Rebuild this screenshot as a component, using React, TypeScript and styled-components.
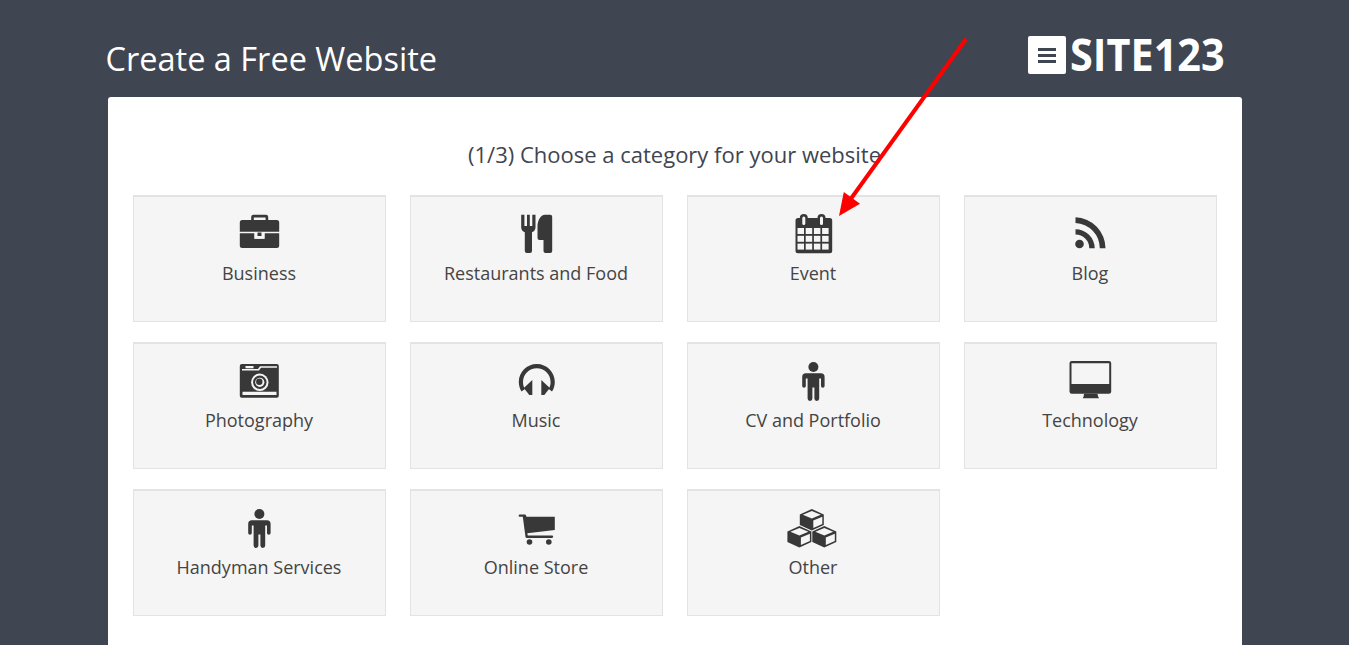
import React from 'react';
import styled, { createGlobalStyle } from 'styled-components';

const GlobalStyle = createGlobalStyle`
  html, body {
    margin: 0;
    padding: 0;
    height: 100%;
    overflow: hidden;
    background: #3f4551;
  }
  * {
    box-sizing: border-box;
  }
`;

const Page = styled.div`
  position: relative;
  height: 645px;
  overflow: hidden;
  padding: 0 107px 0 108px;
  background: #3f4551;
  font-family: 'Open Sans', 'Liberation Sans', sans-serif;
`;

const Header = styled.header`
  display: flex;
  justify-content: space-between;
  align-items: flex-start;
  height: 97px;
  padding: 36px 19px 0 0;
`;

const Title = styled.h1`
  margin: 1px 0 0 -2.5px;
  font-size: 32.5px;
  line-height: 44px;
  font-weight: 400;
  color: #fff;
`;

const Logo = styled.div`
  display: flex;
  align-items: center;
  gap: 4px;
  height: 38px;
`;

const LogoMark = styled.div`
  display: flex;
  flex-direction: column;
  justify-content: center;
  gap: 3px;
  width: 38px;
  height: 38px;
  padding: 0 10px;
  background: #fff;
  border-radius: 2px;
`;

const LogoBar = styled.span`
  display: block;
  height: 3px;
  background: #3f4551;
`;

const LogoText = styled.span`
  width: 153px;
  margin-top: -2px;
  font-size: 45px;
  line-height: 38px;
  font-weight: 700;
  white-space: nowrap;
  color: #fff;
  transform: scaleX(0.92);
  transform-origin: left center;
`;

const Panel = styled.main`
  height: 700px;
  padding: 40px 24px 0 25px;
  background: #fff;
  border-radius: 3px;
`;

const Heading = styled.h2`
  margin: 0 0 23px;
  padding-right: 2px;
  font-size: 22px;
  line-height: 35px;
  font-weight: 400;
  text-align: center;
  color: #3f4551;
`;

const Grid = styled.div`
  display: grid;
  grid-template-columns: repeat(4, 253px);
  grid-auto-rows: 127px;
  column-gap: 24px;
  row-gap: 20px;
`;

const Card = styled.div`
  display: flex;
  flex-direction: column;
  align-items: center;
  padding-top: 15px;
  background: #f5f5f5;
  border: 1px solid #e3e3e3;
  border-top-width: 2px;
`;

const IconBox = styled.svg`
  display: block;
  width: 60px;
  height: 42px;
  fill: #383838;
`;

const Label = styled.span`
  margin-top: 6px;
  padding-right: 1px;
  font-size: 18px;
  line-height: 26px;
  color: #444;
`;

const ArrowLayer = styled.svg`
  position: absolute;
  top: 0;
  left: 0;
  width: 1349px;
  height: 645px;
  pointer-events: none;
`;

const W = '#f5f5f5';

const Briefcase = () => (
  <IconBox viewBox="0 0 60 42">
    <path d="M21.2 8V5a2.3 2.3 0 0 1 2.3-2.3h12.4A2.3 2.3 0 0 1 38.2 5v3h-2.6V5.4H23.8V8z" />
    <path d="M12.3 8h34.4a2.5 2.5 0 0 1 2.5 2.5v9.3H9.8v-9.3a2.5 2.5 0 0 1 2.5-2.5z" />
    <path d="M9.8 21.2h14.7v5.500h10v-5.500h14.700v12.300a2.500 2.500 0 0 1-2.500 2.500H12.300a2.500 2.500 0 0 1-2.500-2.500z" />
    <path fill={W} d="M24.5 20h10v6.700h-10z" />
    <path d="M27.5 20.500h4v3.500h-4z" />
  </IconBox>
);

const Cutlery = () => (
  <IconBox viewBox="0 0 60 42">
    <path d="M14.2 2.700h3.200v11.300h2.600V2.700h2.800v11.300h2.500V2.700h3.200V15.500a5.500 5.500 0 0 1-3.500 4.800V39a2 2 0 0 1-2 2h-3.200a2 2 0 0 1-2-2V20.300a5.500 5.500 0 0 1-3.600-4.800z" />
    <path d="M38 2.700h5.200a2 2 0 0 1 2 2V39a2 2 0 0 1-2 2h-4.700a2 2 0 0 1-2-2V28h-4a2 2 0 0 1-2-2V14c0-5 3-11.300 7.500-11.300z" />
  </IconBox>
);

const CALENDAR_CELLS = [0, 1, 2, 3].flatMap(col =>
  [0, 1, 2].map(row => ({ col, row })),
);

const Calendar = () => (
  <IconBox viewBox="0 0 60 42">
    <rect x="11.5" y="6" width="36.7" height="35.3" rx="2.5" />
    <rect x="15.8" y="2" width="8" height="12" rx="4" />
    <rect x="33.5" y="2" width="8" height="12" rx="4" />
    <rect x="18.3" y="4.5" width="3" height="8.5" rx="1.5" fill={W} />
    <rect x="36" y="4.5" width="3" height="8.5" rx="1.5" fill={W} />
    {CALENDAR_CELLS.map(({ col, row }) => (
      <rect
        key={`${col}-${row}`}
        x={13.5 + col * 8.2}
        y={16 + row * 7.8}
        width="6.5"
        height="6"
        fill={W}
      />
    ))}
  </IconBox>
);

const Rss = () => (
  <IconBox viewBox="0 0 60 42">
    <circle cx="18.5" cy="32" r="4.3" />
    <path d="M14.5 17.2v5.400a13.800 13.800 0 0 1 13.800 13.700h5.400A19.200 19.200 0 0 0 14.500 17.200z" />
    <path d="M14.5 5.3v5.600a25.400 25.400 0 0 1 24.300 25.400h5.700A31 31 0 0 0 14.500 5.300z" />
  </IconBox>
);

const Camera = () => (
  <IconBox viewBox="0 0 60 42">
    <rect x="9.8" y="5" width="39" height="33.7" rx="2" />
    <path fill={W} d="M15.5 7h8v2.300h-8zM12 10h16l2-2.800h17v1.600H31l-2 2.800H12z" />
    <path fill={W} d="M12.5 32.700h34v3.300h-34z" />
    <circle cx="29.8" cy="23.3" r="8.7" fill={W} />
    <circle cx="29.8" cy="23.3" r="6.7" />
    <circle cx="29.8" cy="23.3" r="4.6" fill={W} />
    <circle cx="29.3" cy="22.8" r="3.2" />
  </IconBox>
);

const Headphones = () => (
  <IconBox viewBox="0 0 60 42">
    <path d="M29.8 5C19.8 5 11.8 13 11.8 23c0 3.600 1 6.800 2.800 9.500l3.300-2.600c-1.300-2-1.900-4.300-1.900-6.900 0-7.600 6.200-13.700 13.800-13.700S43.600 15.400 43.600 23c0 2.600-.6 4.900-1.900 6.900l3.300 2.600c1.800-2.700 2.800-5.900 2.800-9.500 0-10-8-18-18-18z" />
    <path d="M25.3 21v15h-3l-5.500-7z" />
    <path d="M34.3 21v15h3l5.500-7z" />
  </IconBox>
);

const Person = () => (
  <IconBox viewBox="0 0 60 42">
    <circle cx="29.4" cy="8" r="5" />
    <path d="M21.9 14.300h15a3.700 3.700 0 0 1 3.700 3.700v9a1.800 1.800 0 0 1-3.600 0v-7.500h-1.800v20.100a2.400 2.400 0 0 1-4.800 0V28.500h-2v11.100a2.400 2.400 0 0 1-4.800 0V19.500h-1.800V27a1.800 1.800 0 0 1-3.600 0v-9a3.700 3.700 0 0 1 3.700-3.700z" />
  </IconBox>
);

const Monitor = () => (
  <IconBox viewBox="0 0 60 42">
    <path
      fillRule="evenodd"
      d="M10.8 2h37.100a2.300 2.300 0 0 1 2.300 2.300v28.100a2.300 2.300 0 0 1-2.300 2.300H10.800a2.300 2.300 0 0 1-2.300-2.300V4.300A2.300 2.300 0 0 1 10.800 2zM10.500 4.300V25h37.700V4.300z"
    />
    <path d="M23 34.700h13.500l.5 2.600 1 2h-16.300l1-2z" />
  </IconBox>
);

const Cart = () => (
  <IconBox viewBox="0 0 60 42">
    <path d="M12.8 8.500h5a1.300 1.300 0 0 1 1.300 1l.3 1.200h28.400V24l-27.500 3.300.5 2.300H45a1.150 1.150 0 0 1 0 2.300H19.800a1.300 1.300 0 0 1-1.300-1L15.800 10.800h-3a1.150 1.150 0 0 1 0-2.300z" />
    <circle cx="22.5" cy="36" r="2.8" />
    <circle cx="41.8" cy="36" r="2.8" />
  </IconBox>
);

const Cube = ({ c, t }: { c: number; t: number }) => (
  <g>
    <polygon
      points={`${c},${t} ${c + 12},${t + 5.5} ${c + 12},${t + 16} ${c},${t + 21.5} ${c - 12},${t + 16} ${c - 12},${t + 5.5}`}
    />
    <polygon
      fill={W}
      points={`${c},${t + 2} ${c + 9},${t + 5.8} ${c},${t + 9.5} ${c - 9},${t + 5.8}`}
    />
    <polygon
      fill={W}
      points={`${c + 1.5},${t + 11.5} ${c + 10.5},${t + 7.8} ${c + 10.5},${t + 15} ${c + 1.5},${t + 19}`}
    />
  </g>
);

const Cubes = () => (
  <IconBox viewBox="0 0 60 42">
    <Cube c={27.8} t={3} />
    <Cube c={15.4} t={20} />
    <Cube c={40.3} t={20} />
  </IconBox>
);

const CATEGORIES = [
  { label: 'Business', Icon: Briefcase },
  { label: 'Restaurants and Food', Icon: Cutlery },
  { label: 'Event', Icon: Calendar },
  { label: 'Blog', Icon: Rss },
  { label: 'Photography', Icon: Camera },
  { label: 'Music', Icon: Headphones },
  { label: 'CV and Portfolio', Icon: Person },
  { label: 'Technology', Icon: Monitor },
  { label: 'Handyman Services', Icon: Person },
  { label: 'Online Store', Icon: Cart },
  { label: 'Other', Icon: Cubes },
];

function App() {
  return (
    <Page>
      <GlobalStyle />
      <Header>
        <Title>Create a Free Website</Title>
        <Logo>
          <LogoMark>
            <LogoBar />
            <LogoBar />
            <LogoBar />
          </LogoMark>
          <LogoText>SITE123</LogoText>
        </Logo>
      </Header>
      <Panel>
        <Heading>(1/3) Choose a category for your website</Heading>
        <Grid>
          {CATEGORIES.map(({ label, Icon }) => (
            <Card key={label}>
              <Icon />
              <Label>{label}</Label>
            </Card>
          ))}
        </Grid>
      </Panel>
      <ArrowLayer viewBox="0 0 1349 645">
        <line x1="966" y1="39" x2="850" y2="200" stroke="#ff0000" strokeWidth="4" />
        <polygon points="839,216 843.8,192 860,203.7" fill="#ff0000" />
      </ArrowLayer>
    </Page>
  );
}

export default App;
